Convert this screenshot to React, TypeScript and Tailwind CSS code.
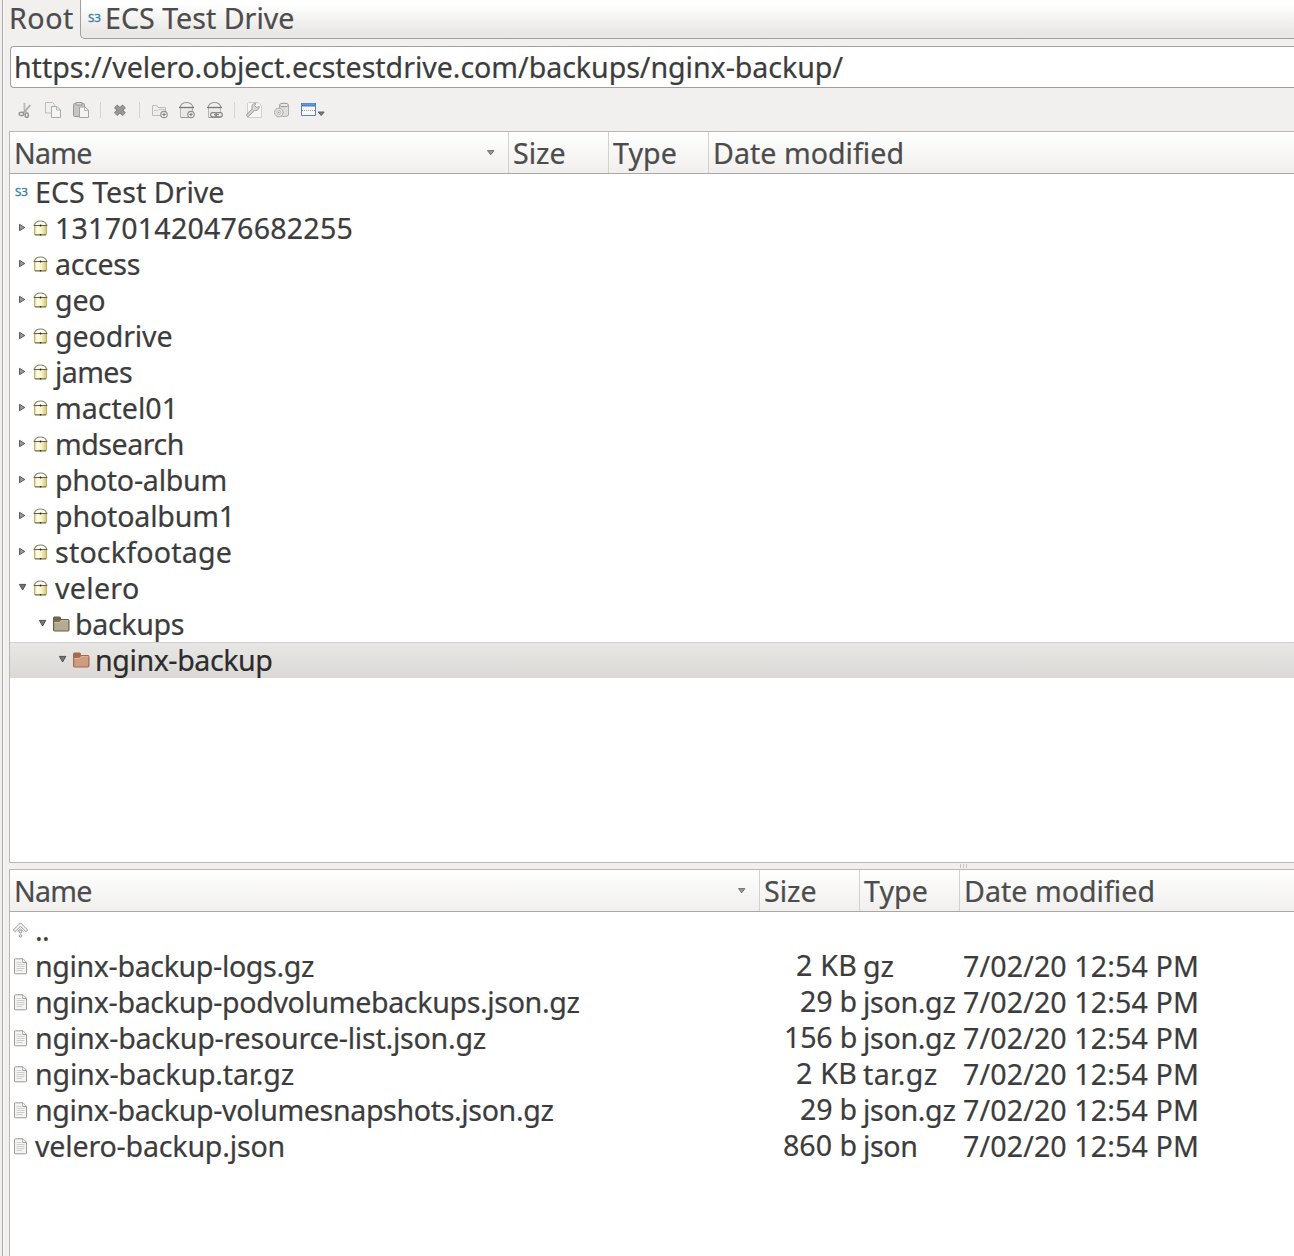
import { useLayoutEffect, useRef, useState } from "react";
import type { ReactNode } from "react";

/** Text tracked so that it fills a given width. */
function Label({ children, w, className = "" }: { children: string; w: number; className?: string }) {
  const ref = useRef<HTMLSpanElement>(null);
  const [spacing, setSpacing] = useState(0);
  useLayoutEffect(() => {
    if (ref.current) {
      const natural = ref.current.getBoundingClientRect().width - spacing * children.length;
      setSpacing((w - natural) / children.length);
    }
  }, [children, w]);
  return (
    <span ref={ref} className={"shrink-0 whitespace-pre " + className} style={{ letterSpacing: spacing + "px" }}>
      {children}
    </span>
  );
}

function S3() {
  return (
    <svg width="14" height="12" viewBox="0 0 14 12" className="shrink-0">
      <text x="0" y="9.700" fontSize="10.5" textLength="13" lengthAdjust="spacingAndGlyphs" fill="#3b819e" stroke="#3b819e" strokeWidth="0.35" fontFamily="Noto Sans, sans-serif">S3</text>
    </svg>
  );
}

function Arrow({ open }: { open?: boolean }) {
  return (
    <svg width="8" height="9" viewBox="0 0 8 9" className="shrink-0">
      {open ? (
        <path d="M.4 1.4h6.400L3.600 7Z" fill="#777" stroke="#464646" strokeWidth=".9" />
      ) : (
        <path d="M.5 1.300v6.400L5.800 4.500Z" fill="#999" stroke="#505050" strokeWidth=".9" />
      )}
    </svg>
  );
}

function SortArrow() {
  return (
    <svg width="8" height="6" viewBox="0 0 8 6" className="shrink-0">
      <path d="M.5.6h6.400L3.700 4.800Z" fill="#999" stroke="#666" strokeWidth=".9" />
    </svg>
  );
}

function Bucket() {
  return (
    <svg width="15" height="16" viewBox="0 0 15 16" className="shrink-0">
      <defs>
        <linearGradient id="bucket" x1="0" x2="1" y1="0" y2="0">
          <stop offset="0" stopColor="#e3d98f" />
          <stop offset=".25" stopColor="#fffef0" />
          <stop offset=".6" stopColor="#f8f2c4" />
          <stop offset="1" stopColor="#d2c57a" />
        </linearGradient>
      </defs>
      <path d="M1.200 5.500C2 2.700 4.200 1 7.500 1s5.500 1.700 6.300 4.500" fill="none" stroke="#87825c" strokeWidth="1.100" />
      <path d="M1.500 5.500h12v9.300h-12Z" fill="url(#bucket)" stroke="#b5a762" strokeWidth=".9" />
      <path d="M.6 5.500h13.800" stroke="#6b6440" strokeWidth="1.100" />
      <path d="M2 14.900h11" stroke="#6f6737" />
      <circle cx="7.500" cy="5.500" r=".9" fill="#222" />
      <circle cx="7.500" cy="14.700" r=".8" fill="#222" />
    </svg>
  );
}

function Folder({ active }: { active?: boolean }) {
  return (
    <svg width="17" height="16" viewBox="0 0 17 16" className="shrink-0">
      <path d="M.5 14V2Q.5 1 1.500 1h5q1 0 1 1v1.500h7.500q1 0 1 1V14q0 1-1 1H1.500q-1 0-1-1Z" fill={active ? "#a9694c" : "#766953"} stroke={active ? "#a2694c" : "#655a47"} />
      <path d="M1.200 14V6h5l1.800-1.700h7.300V14q0 .5-.5.5H1.700q-.5 0-.5-.5Z" fill={active ? "#d09c81" : "#b6aa93"} />
      <path d="M1.200 6.400h5.200l1.800-1.700h7.100" fill="none" stroke={active ? "#e6bea8" : "#d1c8b7"} strokeWidth=".8" />
    </svg>
  );
}

function FileIcon() {
  return (
    <svg width="14" height="17" viewBox="0 0 14 17" className="shrink-0">
      <path d="M1.500.8h7.500l3.500 3.500V15q0 .8-1 .8H1.300q-.8 0-.8-.8V1.800q0-1 1-1Z" fill="#f5f5f3" stroke="#8e908b" strokeWidth=".9" />
      <path d="M8.700 1v3.500h3.600" fill="#fff" stroke="#8e908b" strokeWidth=".8" />
      <path d="M2.500 4.500h5M2.500 6.500h8M2.500 8.500h8M2.500 10.500h8M2.500 12.500h6" stroke="#c9cac7" strokeWidth=".9" />
    </svg>
  );
}

function UpIcon() {
  return (
    <svg width="16" height="16" viewBox="0 0 16 16" className="shrink-0">
      <path d="M7.500.8 14.600 8l-1.500 1.700L7.500 4.300 1.900 9.700.4 8Z" fill="#fff" stroke="#858585" strokeWidth=".9" />
      <path d="m4.300 9.800 3.200-3 3.200 3" fill="none" stroke="#999" strokeWidth=".9" />
      <circle cx="7.500" cy="9.700" r="1.300" fill="#fff" stroke="#858585" strokeWidth=".9" />
      <circle cx="7.500" cy="13.900" r="1.300" fill="#fff" stroke="#858585" strokeWidth=".9" />
    </svg>
  );
}

function Tool({ children, className = "" }: { children: ReactNode; className?: string }) {
  return (
    <svg width="18" height="18" viewBox="0 0 18 18" fill="none" stroke="#a0a09e" className={"shrink-0 " + className}>
      {children}
    </svg>
  );
}

function PailShape() {
  return (
    <>
      <path d="M2 6.500C2.800 3.300 5 1.500 8.500 1.500s5.700 1.800 6.500 5" stroke="#9c9c9a" strokeWidth="1.100" />
      <path d="M2.500 6.500h12v10h-12Z" fill="#e9e9e7" stroke="#b5b5b3" />
      <path d="M1 6.500h15" stroke="#777" strokeWidth="1.300" />
      <path d="M3 16.500h11" stroke="#999" />
    </>
  );
}

function Plus() {
  return (
    <>
      <circle cx="13" cy="13.500" r="3.200" fill="#f6f6f5" stroke="#909090" strokeWidth="1.200" />
      <path d="M11.300 13.500h3.400M13 11.800v3.400" stroke="#7d7d7d" strokeWidth="1.100" />
    </>
  );
}

function Toolbar() {
  return (
    <div className="flex h-[43px] shrink-0 items-center pl-[7px]">
      <Tool>
        <path d="M8.500 1.800v7l2 3" stroke="#bdbdbb" strokeWidth="2" />
        <path d="m14.300 4-5 6-2.500 1.800" stroke="#aeaeac" strokeWidth="1.900" />
        <ellipse cx="5.500" cy="12.900" rx="2.300" ry="1.600" stroke="#979795" strokeWidth="1.500" />
        <ellipse cx="10.800" cy="14.200" rx="1.600" ry="2.100" stroke="#979795" strokeWidth="1.500" />
      </Tool>
      <Tool className="ml-[10px]">
        <path d="M1.500 1.500h7l2 2v8.500h-9Z" fill="#f0f0ee" stroke="#bcbcba" />
        <path d="M7.500 5.500H13l3.500 3.500v7.500h-9Z" fill="#f5f5f4" stroke="#a9a9a7" />
        <path d="M12.500 5.500V9h4" stroke="#b5b5b3" />
      </Tool>
      <Tool className="ml-[10px]">
        <path d="M1.500 3.500q0-1 1-1h9q1 0 1 1v11q0 1-1 1h-9q-1 0-1-1Z" fill="#c5c5c3" stroke="#989896" />
        <path d="M4 4V1.500h6V4Z" fill="#ddd" stroke="#999" />
        <path d="M7.500 6H13l3.500 3v7.500h-9Z" fill="#f4f4f3" stroke="#a4a4a2" />
        <path d="M12.500 6v3.500h4" stroke="#b5b5b3" />
      </Tool>
      <div className="ml-[10px] h-4 w-px bg-[#d6d5d2]" />
      <Tool className="ml-[10px]">
        <path d="m4.600 5.300 8.600 8m0-8-8.600 8" stroke="#828280" strokeWidth="4.800" />
        <path d="m4.600 5.300 8.600 8m0-8-8.600 8" stroke="#989896" strokeWidth="2.800" />
      </Tool>
      <div className="ml-[10px] h-4 w-px bg-[#d6d5d2]" />
      <Tool className="ml-[11px]">
        <path d="M1.500 14.500V4.500h4.500l1 2h7.500v8Z" fill="#ededeb" stroke="#bcbcba" />
        <path d="M3 9.500h4l1-1h6" stroke="#c5c5c3" />
        <Plus />
      </Tool>
      <Tool className="ml-[9px]">
        <PailShape />
        <Plus />
      </Tool>
      <Tool className="ml-[10px]">
        <PailShape />
        <rect x="4.700" y="11.600" width="6.300" height="4.300" rx="2" fill="#eee" stroke="#858583" strokeWidth="1.200" />
        <rect x="10" y="11.600" width="6.300" height="4.300" rx="2" fill="#eee" stroke="#858583" strokeWidth="1.200" />
        <path d="M8 13.700h5" stroke="#777" />
      </Tool>
      <div className="ml-[10px] h-4 w-px bg-[#d6d5d2]" />
      <Tool className="ml-[10px]">
        <path d="M3.500 1.500H13l3.500 3.500v11.500h-14v-14Z" fill="#f7f7f6" stroke="#d0d0ce" />
        <path d="m3 14 6.500-6.500" stroke="#a2a2a0" strokeWidth="3.600" strokeLinecap="round" />
        <path d="M14.200 5.500a3.700 3.700 0 1 1-3.300-3.300L9.700 4.700l1.500 1.700Z" fill="#d8d8d6" stroke="#a2a2a0" />
        <path d="m3 14 6.500-6.500" stroke="#dadad8" strokeWidth="1.700" strokeLinecap="round" />
      </Tool>
      <Tool className="ml-[10px]">
        <path d="M6.500 4v10c0 2 9 2 9 0V4" fill="#dededc" stroke="#adadab" />
        <ellipse cx="11" cy="4" rx="4.500" ry="1.800" fill="#e8e8e6" stroke="#989896" />
        <circle cx="5.800" cy="11.500" r="4.300" fill="#e6e6e4" stroke="#a9a9a7" />
        <circle cx="5.800" cy="11.500" r="2.200" stroke="#c3c3c1" />
        <circle cx="5.800" cy="11.500" r=".8" fill="#999" stroke="none" />
      </Tool>
      <svg width="26" height="18" viewBox="0 0 26 18" className="ml-[9px] shrink-0">
        <path d="M1.500 2.500h14v12h-14Z" fill="#f8f9fb" stroke="#5a82bd" />
        <path d="M1 2h15v3.500H1Z" fill="#4f81c8" />
        <path d="M2 3.200h13" stroke="#83a9df" strokeWidth=".8" />
        <path d="M2 9.500h13" stroke="#999" strokeDasharray="1 1" />
        <path d="M18.200 11h6L21.200 14.500Z" fill="#777" stroke="#606060" />
      </svg>
    </div>
  );
}

function Header({ nameWidth }: { nameWidth: string }) {
  const cell = "flex h-full shrink-0 items-center border-r border-[#d3d1ce] pl-1";
  return (
    <div className="flex h-[42px] shrink-0 items-center border-b border-[#aaa8a4] bg-linear-to-b from-white to-[#f0efed] leading-[41px] text-[#4c4c4c]">
      <div className={cell + " justify-between pr-[13px] " + nameWidth}>
        <Label w={77.5}>Name</Label>
        <SortArrow />
      </div>
      <div className={cell + " w-[100px]"}><Label w={52.5}>Size</Label></div>
      <div className={cell + " w-[100px]"}><Label w={64}>Type</Label></div>
      <div className="pl-1"><Label w={191}>Date modified</Label></div>
    </div>
  );
}

const buckets: [string, number][] = [
  ["131701420476682255", 298],
  ["access", 85],
  ["geo", 50.5],
  ["geodrive", 117.5],
  ["james", 77],
  ["mactel01", 123],
  ["mdsearch", 129],
  ["photo-album", 172],
  ["photoalbum1", 180],
  ["stockfootage", 177],
  ["velero", 84.5],
];

const files: [string, number, string, number, string, number][] = [
  ["nginx-backup-logs.gz", 279, "2 KB", 61, "gz", 31],
  ["nginx-backup-podvolumebackups.json.gz", 544.5, "29 b", 57, "json.gz", 92.5],
  ["nginx-backup-resource-list.json.gz", 451, "156 b", 73, "json.gz", 92.5],
  ["nginx-backup.tar.gz", 259, "2 KB", 61, "tar.gz", 74.5],
  ["nginx-backup-volumesnapshots.json.gz", 518.5, "29 b", 57, "json.gz", 92.5],
  ["velero-backup.json", 250, "860 b", 74, "json", 54.5],
];

function Tree() {
  return (
    <section className="flex h-[732px] shrink-0 flex-col border-y border-l border-[#bab8b5] bg-white">
      <Header nameWidth="w-[499px]" />
      <div className="flex h-9 items-center pl-[5px]">
        <S3 />
        <Label w={189.5} className="ml-[6px]">ECS Test Drive</Label>
      </div>
      {buckets.map(([name, w]) => (
        <div key={name} className="flex h-9 items-center pl-[9px]">
          <div className="mb-[2px] flex"><Arrow open={name === "velero"} /></div>
          <div className="ml-[6px] flex"><Bucket /></div>
          <Label w={w} className="ml-[7px]">{name}</Label>
        </div>
      ))}
      <div className="flex h-9 items-center pl-[29px]">
        <div className="mb-[2px] flex"><Arrow open /></div>
        <div className="ml-[6px] flex"><Folder /></div>
        <Label w={109} className="ml-[5px]">backups</Label>
      </div>
      <div className="flex h-9 items-center border-t border-[#d2d1cf] bg-linear-to-b from-[#e8e7e5] to-[#dad9d6] pb-px pl-[49px] leading-[34px] text-[#2b2b2b]">
        <div className="mb-[2px] flex"><Arrow open /></div>
        <div className="ml-[6px] flex"><Folder active /></div>
        <Label w={177.5} className="ml-[5px]">nginx-backup</Label>
      </div>
    </section>
  );
}

function FileList() {
  return (
    <section className="flex flex-1 flex-col border-l border-t border-[#bab8b5] bg-white">
      <Header nameWidth="w-[750px]" />
      <div className="flex h-9 items-center pl-[3px]">
        <UpIcon />
        <Label w={14} className="ml-[6px]">..</Label>
      </div>
      {files.map(([name, w, size, sw, type, tw]) => (
        <div key={name} className="flex h-9 items-center">
          <div className="flex w-[750px] shrink-0 items-center pl-1">
            <FileIcon />
            <Label w={w} className="ml-[7px]">{name}</Label>
          </div>
          <div className="mb-0.5 flex w-[97px] shrink-0 justify-end"><Label w={sw}>{size}</Label></div>
          <div className="ml-[6px] w-[100px] shrink-0"><Label w={tw}>{type}</Label></div>
          <Label w={236}>7/02/20 12:54 PM</Label>
        </div>
      ))}
    </section>
  );
}

export default function App() {
  return (
    <div className="flex h-[1256px] w-[1294px] overflow-hidden bg-[#f1f0ee] font-['Noto_Sans',sans-serif] text-[28.6px] leading-9 text-[#3c3c3c] [-webkit-text-stroke:0.2px]">
      <div className="w-[9px] shrink-0 pl-[2px]">
        <div className="h-full w-[2px] border-l border-r border-l-[#aaa8a5] border-r-[#fbfbfa]" />
      </div>
      <main className="flex min-w-0 flex-1 flex-col">
        <div className="flex h-[39px] shrink-0 text-[#4c4c4c]">
          <div className="w-[71px] shrink-0"><Label w={65}>Root</Label></div>
          <div className="flex flex-1 items-center rounded-bl-[5px] border-b border-l border-[#a2a09d] bg-linear-to-b from-white from-10% to-[#e9e8e6] to-85% pb-[3px] pl-[7px]">
            <S3 />
            <Label w={189.5} className="ml-[3px]">ECS Test Drive</Label>
          </div>
        </div>
        <div className="ml-px mt-[7px] flex h-[42px] shrink-0 items-center rounded-l-[4px] border-y border-l border-[#a2a09d] bg-white pb-px pl-[3px]">
          <Label w={829}>https://velero.object.ecstestdrive.com/backups/nginx-backup/</Label>
        </div>
        <Toolbar />
        <Tree />
        <div className="flex h-[6px] shrink-0 items-center pl-[951px]">
          <div className="flex gap-[2px]">
            <i className="h-1 w-px bg-[#c4c3c0]" />
            <i className="h-1 w-px bg-[#c4c3c0]" />
            <i className="h-1 w-px bg-[#c4c3c0]" />
          </div>
        </div>
        <FileList />
      </main>
    </div>
  );
}
